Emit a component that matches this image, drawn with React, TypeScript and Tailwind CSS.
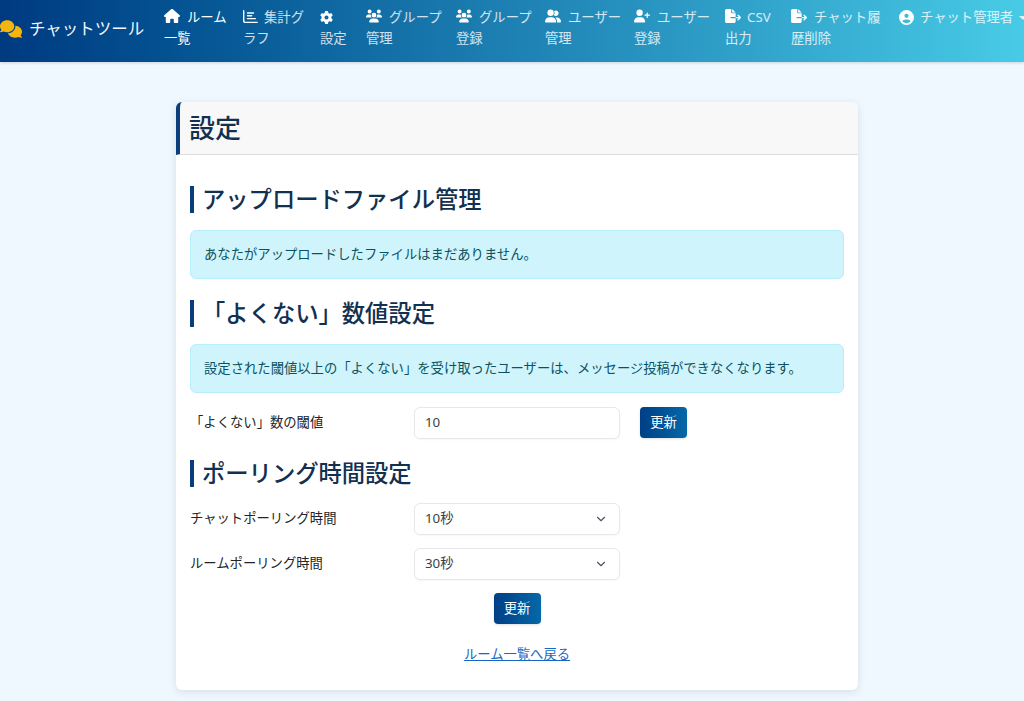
import { FaComments, FaHouse, FaRegChartBar, FaGear, FaUsers, FaUserGroup, FaUserPlus, FaFileExport, FaCircleUser } from 'react-icons/fa6'
import { ChevronDown } from 'lucide-react'
import type { ReactNode } from 'react'

const navItems = [
  { icon: <FaHouse className="text-[16px]" />, label: 'ルーム一覧', w: 'w-[79px]', gap: 'mr-[7px]', strong: true },
  { icon: <FaRegChartBar className="text-[15px]" />, label: '集計グラフ', w: 'w-[77px]', gap: 'mr-[6px]' },
  { icon: <FaGear className="text-[13px]" />, label: '設定', w: 'w-[46px]', gap: 'mr-[6px]', iconOnOwnLine: true },
  { icon: <FaUsers className="text-[16px]" />, label: 'グループ管理', w: 'w-[90px]', gap: 'mr-[7px]' },
  { icon: <FaUsers className="text-[16px]" />, label: 'グループ登録', w: 'w-[89px]', gap: 'mr-[7px]' },
  { icon: <FaUserGroup className="text-[16px]" />, label: 'ユーザー管理', w: 'w-[89px]', gap: 'mr-[7px]' },
  { icon: <FaUserPlus className="text-[16px]" />, label: 'ユーザー登録', w: 'w-[91px]', gap: 'mr-[7px]' },
  { icon: <FaFileExport className="text-[16px]" />, label: 'CSV出力', w: 'w-[66px]', gap: 'mr-[6px]' },
  { icon: <FaFileExport className="text-[16px]" />, label: 'チャット履歴削除', w: 'w-[108px]', gap: 'mr-[7px]' },
]

function SectionTitle({ children }: { children: ReactNode }) {
  return (
    <h2 className="border-l-4 border-[#0a3d7c] pl-[8px] text-[23.3px] leading-[27px] font-medium text-[#12304f]">
      {children}
    </h2>
  )
}

function Alert({ children }: { children: ReactNode }) {
  return (
    <div className="mt-[17px] h-[49px] flex items-center px-[13px] rounded-md bg-[#cff4fc] border border-[#b6effb] text-[13.33px] text-[#0b5160]">
      {children}
    </div>
  )
}

function UpdateButton() {
  return (
    <button className="block w-[47px] h-[31px] rounded bg-gradient-to-r from-[#003f86] to-[#0668a8] text-white text-[13.33px] shadow-sm">
      更新
    </button>
  )
}

function Field({ value, select }: { value: string; select?: boolean }) {
  return (
    <div className="w-[206px] h-[32px] flex items-center justify-between pl-[10px] pr-[11px] bg-white border border-[#e6e8ec] rounded-md shadow-[0_1px_2px_rgba(0,0,0,0.04)] text-[13.33px] text-[#3a4047]">
      <span>{value}</span>
      {select && <ChevronDown className="w-[14px] h-[14px] text-[#4b5563]" strokeWidth={2} />}
    </div>
  )
}

export default function App() {
  return (
    <div className="min-h-[701px] bg-[#eff7ff] font-['Noto_Sans','Noto_Sans_CJK_JP',sans-serif] overflow-hidden">
      <nav className="h-[62px] flex items-start bg-gradient-to-r from-[#003a80] to-[#48cbe6] shadow-[0_1px_3px_rgba(0,0,0,0.15)] text-white">
        <a className="w-[164px] h-[58px] flex items-center shrink-0">
          <FaComments className="w-[22px] h-[22px] text-[#f5b50f]" />
          <span className="ml-[7px] text-[16.5px] text-[#f2f8fc]">チャットツール</span>
        </a>
        <div className="flex pt-[7px]">
          {navItems.map((item) => (
            <a
              key={item.label}
              className={`${item.w} shrink-0 pr-[10px] text-[13.33px] leading-[21px] ${item.strong ? 'text-white' : 'text-white/80'}`}
            >
              <span className={`inline-flex ${item.gap} align-[-2px] text-white`}>{item.icon}</span>
              {item.iconOnOwnLine && <br />}
              {item.label}
            </a>
          ))}
          <a className="shrink-0 flex items-center h-[21px] text-[13.33px] text-white/80 whitespace-nowrap">
            <FaCircleUser className="mr-[6px] text-[15px] text-white" />
            チャット管理者
            <span className="ml-[6px] w-0 h-0 border-x-[4px] border-x-transparent border-t-[4px] border-t-white/80" />
          </a>
        </div>
      </nav>

      <main className="w-[682px] h-[588px] ml-[176px] mt-[40px] bg-white rounded-md shadow-[0_2px_8px_rgba(0,0,0,0.1)]">
        <header className="h-[53px] flex items-center pl-[9px] bg-[#f8f8f8] border-l-4 border-b border-l-[#0a3d7c] border-b-[#dedede] rounded-t-md">
          <h1 className="text-[26px] font-medium text-[#12304f]">設定</h1>
        </header>

        <div className="px-[14px] pt-[31px]">
          <SectionTitle>アップロードファイル管理</SectionTitle>
          <Alert>あなたがアップロードしたファイルはまだありません。</Alert>

          <div className="mt-[21px]">
            <SectionTitle>「よくない」数値設定</SectionTitle>
          </div>
          <Alert>設定された閾値以上の「よくない」を受け取ったユーザーは、メッセージ投稿ができなくなります。</Alert>

          <div className="mt-[14px] flex items-center">
            <label className="w-[224px] text-[13.33px] text-[#212529]">「よくない」数の閾値</label>
            <Field value="10" />
            <div className="ml-[20px] self-start">
              <UpdateButton />
            </div>
          </div>

          <div className="mt-[21px]">
            <SectionTitle>ポーリング時間設定</SectionTitle>
          </div>

          <div className="mt-[16px] flex items-center">
            <label className="w-[224px] text-[13.33px] text-[#212529]">チャットポーリング時間</label>
            <Field value="10秒" select />
          </div>
          <div className="mt-[13px] flex items-center">
            <label className="w-[224px] text-[13.33px] text-[#212529]">ルームポーリング時間</label>
            <Field value="30秒" select />
          </div>

          <div className="mt-[13px] flex justify-center">
            <UpdateButton />
          </div>
          <div className="mt-[20px] flex justify-center">
            <a className="text-[13.33px] leading-[20px] text-[#1668c4] underline">ルーム一覧へ戻る</a>
          </div>
        </div>
      </main>
    </div>
  )
}
